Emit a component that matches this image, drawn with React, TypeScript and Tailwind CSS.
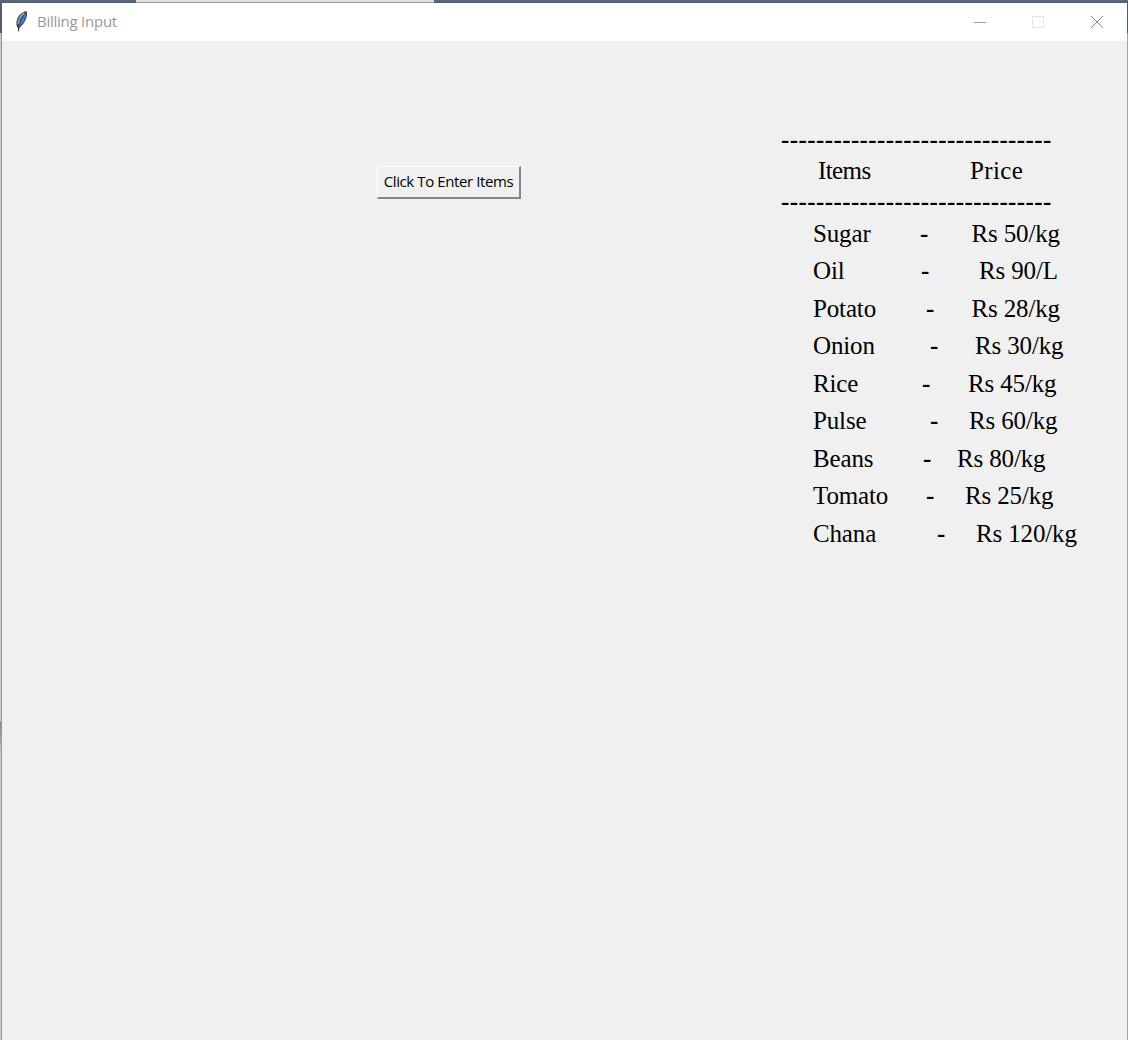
const rows = [
  { name: 'Sugar', price: 'Rs 50/kg', nameW: 'w-[107px]', dashW: 'w-[51.5px]' },
  { name: 'Oil', price: 'Rs 90/L', nameW: 'w-[108px]', dashW: 'w-[58px]' },
  { name: 'Potato', price: 'Rs 28/kg', nameW: 'w-[113px]', dashW: 'w-[45.5px]' },
  { name: 'Onion', price: 'Rs 30/kg', nameW: 'w-[117px]', dashW: 'w-[45px]' },
  { name: 'Rice', price: 'Rs 45/kg', nameW: 'w-[109px]', dashW: 'w-[46px]' },
  { name: 'Pulse', price: 'Rs 60/kg', nameW: 'w-[117px]', dashW: 'w-[39px]' },
  { name: 'Beans', price: 'Rs 80/kg', nameW: 'w-[110px]', dashW: 'w-[34px]' },
  { name: 'Tomato', price: 'Rs 25/kg', nameW: 'w-[113px]', dashW: 'w-[39px]' },
  { name: 'Chana', price: 'Rs 120/kg', nameW: 'w-[124px]', dashW: 'w-[39px]' },
];

function Feather() {
  return (
    <svg width="16" height="22" viewBox="2 0.7 16 22" fill="none">
      <path d="M14 1C10 1.500 6.500 5 5.100 9c-.9 3-.9 5.500-.1 7.500L6.500 18.500l2.500-2.500C12.300 13 14.200 9.500 15 5c.3-2.200.2-4-1-4Z" fill="#41464e" />
      <path d="M13.800 3C11.300 6 9 10.500 7.600 15.500 11.700 12.500 13.500 9 13.800 3Z" fill="#3d85db" />
      <path d="M12.300 2.800C9.300 4.500 6.900 8.500 6.200 13.500" stroke="#8fb3dc" strokeWidth="1.500" />
      <path d="M12 4.500C9 9 7.500 13 6.800 19.500" stroke="#315b8f" strokeWidth=".6" />
      <path d="M6.600 16V21" stroke="#252a32" strokeWidth="1" />
    </svg>
  );
}

function TitleBar() {
  return (
    <header className="flex h-[38px] shrink-0 items-center bg-white pl-3 pr-[24px]">
      <Feather />
      <h1 className="-mt-[2px] ml-[7px] w-[120px] font-['Open_Sans',sans-serif] text-[15px] leading-5 tracking-[-0.25px] text-[#999999]">Billing Input</h1>
      <div className="ml-auto flex items-center gap-[46px]">
        <button aria-label="Minimize" className="h-3 w-3">
          <span className="block h-px w-3 bg-[#999999]" />
        </button>
        <button aria-label="Maximize" className="h-3 w-3 border border-[#e6e6e6]" />
        <button aria-label="Close" className="ml-[1px] h-3 w-3">
          <svg width="12" height="12" viewBox="0 0 12 12">
            <path d="M0 0L12 12M12 0L0 12" stroke="#858585" strokeWidth="1" />
          </svg>
        </button>
      </div>
    </header>
  );
}

function Rule() {
  return (
    <div className="h-[31px] whitespace-nowrap text-[25px] font-bold leading-[31px] tracking-[0.41px]">
      {'-'.repeat(31)}
    </div>
  );
}

function PriceList() {
  return (
    <section className="ml-[260px] mt-[83px] w-[320px] font-['Liberation_Serif',serif] text-[25px] text-black">
      <Rule />
      <div className="flex h-[31px] pl-[37px] leading-[31px]">
        <span className="w-[152px] tracking-[-0.6px]">Items</span>
        <span className="tracking-[0.4px]">Price</span>
      </div>
      <Rule />
      <div className="-mt-[2.5px] pl-8">
        {rows.map((row) => (
          <div key={row.name} className="flex h-[37.5px] whitespace-nowrap leading-[37px] tracking-[-0.15px]">
            <span className={row.nameW}>{row.name}</span>
            <span className={row.dashW + ' font-bold'}>-</span>
            <span>{row.price}</span>
          </div>
        ))}
      </div>
    </section>
  );
}

export default function App() {
  return (
    <div className="flex h-[1040px] w-[1128px] flex-col overflow-hidden bg-[#f0f0f0]">
      <div className="flex h-[3px] shrink-0 bg-gradient-to-b from-[#5b6b7b] to-[#505d6a]">
        <div className="ml-[136px] w-[298px] border-b border-[#a0a0a0] bg-[#dedede]" />
      </div>
      <div className="flex min-h-0 grow">
        <div className="flex w-[2px] shrink-0 flex-col">
          <div className="h-[30px] bg-[#51606f]" />
          <div className="h-[689px] border-r border-[#969696] bg-[#c8c8c8]" />
          <div className="grow border-r border-[#999999] bg-gradient-to-b from-[#808080] via-[#c8c8c8] via-10% to-[#cccccc]" />
        </div>
        <main className="flex w-[1125px] shrink-0 flex-col">
          <TitleBar />
          <div className="flex items-start">
            <button className="ml-[375px] mt-[125px] h-[33px] w-[144px] whitespace-nowrap border-b-2 border-l border-r-2 border-t border-b-[#858585] border-l-white border-r-[#858585] border-t-white bg-[#f0f0f0] pb-[2px] font-['Open_Sans',sans-serif] text-[15px] leading-[28px] tracking-[-0.4px] text-black">
              Click To Enter Items
            </button>
            <PriceList />
          </div>
        </main>
        <div className="flex w-px flex-col">
          <div className="h-[30px] bg-[#515b66]" />
          <div className="grow bg-[#a5a5a5]" />
        </div>
      </div>
    </div>
  );
}
